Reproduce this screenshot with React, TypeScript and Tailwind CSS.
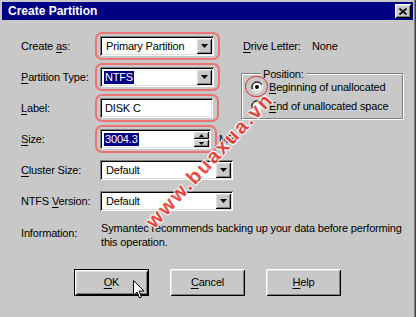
import type { ReactNode } from 'react'

const sunken =
  'shadow-[inset_1px_1px_0_#808080,inset_-1px_-1px_0_#ffffff,inset_2px_2px_0_#000000,inset_-2px_-2px_0_#dfdfdf]'
const raised =
  'shadow-[inset_1px_1px_0_#ffffff,inset_-1px_-1px_0_#000000,inset_2px_2px_0_#dfdfdf,inset_-2px_-2px_0_#808080]'

function U({ children }: { children: ReactNode }) {
  return <span className="underline underline-offset-[2px]">{children}</span>
}

function ArrowButton() {
  return (
    <div className={`absolute right-[2px] top-[2px] w-[16px] h-[16px] bg-[#c8c8c8] ${raised} flex items-center justify-center`}>
      <svg width="7" height="4" viewBox="0 0 7 4">
        <path d="M0 0h7L3.5 4z" fill="#000" />
      </svg>
    </div>
  )
}

function SpinButtons() {
  return (
    <div className="absolute right-[2px] top-[2px] w-[16px] h-[16px] flex flex-col">
      <div className={`h-[8px] bg-[#c8c8c8] ${raised} flex items-center justify-center`}>
        <svg width="5" height="3" viewBox="0 0 5 3">
          <path d="M2.5 0L5 3H0z" fill="#000" />
        </svg>
      </div>
      <div className={`h-[8px] bg-[#c8c8c8] ${raised} flex items-center justify-center`}>
        <svg width="5" height="3" viewBox="0 0 5 3">
          <path d="M0 0h5L2.5 3z" fill="#000" />
        </svg>
      </div>
    </div>
  )
}

function Highlight() {
  return <div className="absolute -left-[5px] -right-[6px] -top-[4px] -bottom-[4px] rounded-[7px] border-2 border-[#e87474]" />
}

function Field({
  width,
  children,
  kind,
  mark,
}: {
  width: string
  children: ReactNode
  kind?: 'select' | 'spin'
  mark?: boolean
}) {
  return (
    <div className={`relative h-[20px] ${width}`}>
      {mark && <Highlight />}
      <div className={`relative h-full bg-white ${sunken} flex items-center pl-[4px]`}>
        {children}
        {kind === 'select' && <ArrowButton />}
        {kind === 'spin' && <SpinButtons />}
      </div>
    </div>
  )
}

function Row({ label, children }: { label: ReactNode; children: ReactNode }) {
  return (
    <div className="flex items-center h-[20px]">
      <div className="w-[79px] shrink-0">{label}</div>
      {children}
    </div>
  )
}

function Radio({ checked }: { checked?: boolean }) {
  return (
    <svg width="12" height="12" viewBox="0 0 12 12">
      <path d="M11 3.5A5.5 5.5 0 0 0 1 8.5" fill="none" stroke="#808080" />
      <path d="M10.5 4A4.5 4.5 0 0 0 1.5 8" fill="none" stroke="#000" />
      <path d="M1 8.5A5.5 5.5 0 0 0 11 3.5" fill="none" stroke="#fff" />
      <circle cx="6" cy="6" r="4" fill="#fff" />
      {checked && <circle cx="6" cy="6" r="2" fill="#000" />}
    </svg>
  )
}

function Button({ children, isDefault }: { children: ReactNode; isDefault?: boolean }) {
  return (
    <div
      className={`w-[75px] h-[27px] flex items-center justify-center bg-[#c8c8c8] ${raised} ${
        isDefault ? 'outline outline-1 outline-black -outline-offset-1 shadow-[inset_2px_2px_0_#ffffff,inset_-2px_-2px_0_#000000,inset_3px_3px_0_#dfdfdf,inset_-3px_-3px_0_#808080]' : ''
      }`}
    >
      {children}
    </div>
  )
}

export default function App() {
  return (
    <div className="relative w-[416px] h-[317px] overflow-hidden bg-[#c8c8c8] pt-[2px] pl-[2px] pr-[3px] font-['Liberation_Sans',Arial,sans-serif] text-[11px] tracking-[-0.17px] text-black shadow-[inset_-1px_0_0_#404040,inset_-2px_0_0_#808080]">
      {/* Title bar */}
      <div className="h-[18px] bg-[#000084] flex items-center justify-between pl-[6px] pr-[2px]">
        <span className="text-white font-bold text-[12px] tracking-normal">Create Partition</span>
        <div className={`w-[16px] h-[14px] bg-[#c8c8c8] ${raised} flex items-center justify-center`}>
          <svg width="8" height="7" viewBox="0 0 8 7">
            <path d="M0.5 0.5L7.5 6.5M7.5 0.5L0.5 6.5" stroke="#000" strokeWidth="1.6" />
          </svg>
        </div>
      </div>

      {/* Body */}
      <div className="flex pt-[16px] pl-[19px]">
        <div className="w-[220px] shrink-0 flex flex-col gap-[11px]">
          <Row label={<>Create <U>a</U>s:</>}>
            <Field width="w-[114px]" kind="select" mark>
              <span className="pl-[2px]">Primary Partition</span>
            </Field>
          </Row>
          <Row label={<><U>P</U>artition Type:</>}>
            <Field width="w-[114px]" kind="select" mark>
              <span className="bg-[#000084] text-white px-[1px] leading-[13px]">NTFS</span>
            </Field>
          </Row>
          <Row label={<><U>L</U>abel:</>}>
            <Field width="w-[113px]" mark>
              <span className="pl-[1px]">DISK C</span>
            </Field>
          </Row>
          <Row label={<><U>S</U>ize:</>}>
            <Field width="w-[111px]" kind="spin" mark>
              <span className="bg-[#000084] text-white px-[1px] leading-[13px]">3004.3</span>
            </Field>
            <span className="ml-[8px]">MB</span>
          </Row>
          <Row label={<><U>C</U>luster Size:</>}>
            <Field width="w-[133px]" kind="select">
              <span className="pl-[2px]">Default</span>
            </Field>
          </Row>
          <Row label={<>NTFS <U>V</U>ersion:</>}>
            <Field width="w-[133px]" kind="select">
              <span className="pl-[2px]">Default</span>
            </Field>
          </Row>
        </div>

        <div className="flex flex-col">
          <div className="h-[20px] flex items-center pl-[2px]">
            <span className="w-[69px]"><U>D</U>rive Letter:</span>
            <span>None</span>
          </div>
          <div className="relative mt-[17px] w-[162px] h-[46px] border border-[#808080] shadow-[1px_1px_0_#ffffff,inset_1px_1px_0_#ffffff]">
            <span className="absolute -top-[8px] left-[19px] px-[2px] bg-[#c8c8c8]">Position:</span>
            <div className="flex flex-col gap-[7px] pt-[7px] pl-[9px]">
              <div className="relative flex items-center gap-[6px] h-[12px]">
                <div className="absolute -left-[6px] -top-[5px] w-[23px] h-[21px] rounded-full border-[1.5px] border-[#e02424]" />
                <Radio checked />
                <span><U>B</U>eginning of unallocated</span>
              </div>
              <div className="flex items-center gap-[6px] h-[12px]">
                <Radio />
                <span><U>E</U>nd of unallocated space</span>
              </div>
            </div>
          </div>
        </div>
      </div>

      {/* Information */}
      <div className="flex pl-[19px] mt-[10px]">
        <div className="w-[80px] shrink-0 pt-[4px]">Information:</div>
        <div className="whitespace-nowrap leading-[14px]">
          Symantec recommends backing up your data before performing
          <br />
          this operation.
        </div>
      </div>

      {/* Buttons */}
      <div className="flex justify-center gap-[21px] mt-[20px]">
        <Button isDefault>
          <U>O</U>K
        </Button>
        <Button>
          <U>C</U>ancel
        </Button>
        <Button>
          <U>H</U>elp
        </Button>
      </div>

      {/* Mouse cursor */}
      <svg className="absolute left-[133px] top-[280px]" width="12" height="19" viewBox="0 0 12 19">
        <path d="M0.5 0.5V15.5L4 12L6.5 18L8.5 17L6 11H11Z" fill="#fff" stroke="#000" strokeWidth="1" strokeLinejoin="miter" />
      </svg>

      {/* Watermark */}
      <div className="absolute left-[209px] top-[160px] w-0 h-0 flex items-center justify-center pointer-events-none">
        <span className="whitespace-nowrap -rotate-[47deg] text-[#e53b33] font-bold text-[20px] tracking-[2px] opacity-90 [text-shadow:1px_1px_0_#fff,-1px_-1px_0_#fff,1px_-1px_0_#fff,-1px_1px_0_#fff]">
          www.buaxua.vn
        </span>
      </div>
    </div>
  )
}
